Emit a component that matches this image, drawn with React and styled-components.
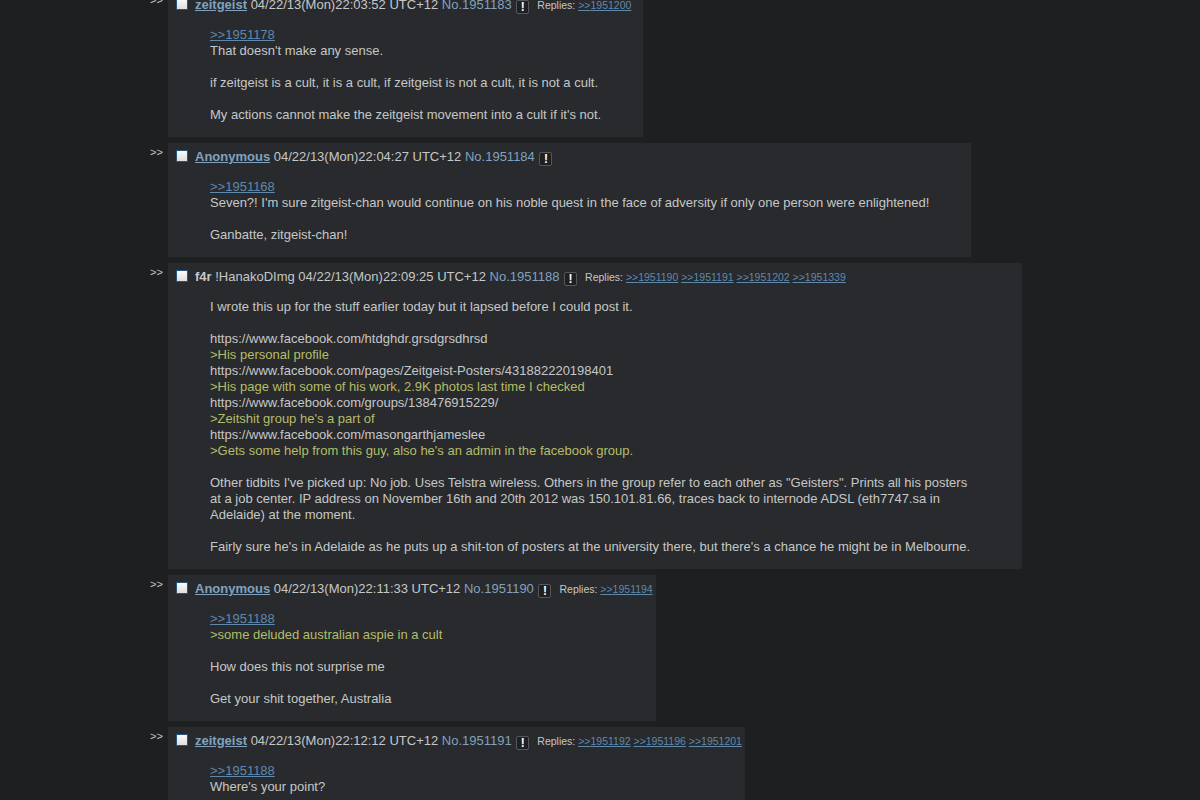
import React from 'react';
import styled, { createGlobalStyle } from 'styled-components';

const GlobalStyle = createGlobalStyle`
  body {
    margin: 0;
    background: #1d1f21;
    color: #c5c8c6;
    font-family: "Liberation Sans", Arial, sans-serif;
    font-size: 13px;
  }
`;

const Thread = styled.div`
  display: flex;
  flex-direction: column;
  align-items: flex-start;
  gap: 6px;
  padding-left: 150px;
  margin-top: -9px;
  height: 809px;
  overflow: hidden;
`;

const Row = styled.div`
  display: flex;
  align-items: flex-start;
`;

const SideArrows = styled.div`
  width: 18px;
  font-size: 11px;
  line-height: 12px;
  margin-top: 3px;
  color: #c5c8c6;
`;

const Post = styled.div`
  background: #282a2e;
  padding: 2px;
  max-width: 855px;
`;

const PostInfo = styled.div`
  height: 24px;
  line-height: 24px;
  padding: 0 1px 0 6px;
  white-space: nowrap;
`;

const Check = styled.span`
  display: inline-block;
  width: 10px;
  height: 10px;
  border: 1px solid #2a5580;
  background: linear-gradient(#fbfbfb, #dedede);
  vertical-align: -1px;
  margin-right: 7px;
`;

const Name = styled.a`
  font-weight: bold;
  color: ${p => (p.$link ? '#81a2be' : '#c5c8c6')};
  text-decoration: ${p => (p.$link ? 'underline' : 'none')};
`;

const PostNum = styled.span`
  color: #81a2be;
`;

const Menu = styled.span`
  display: inline-block;
  width: 11px;
  height: 12px;
  line-height: 12px;
  margin: 0 8px 0 1px;
  border: 1px solid #55575a;
  border-radius: 2px;
  background: #1d1f21;
  color: #fff;
  font-weight: bold;
  font-size: 12px;
  text-align: center;
  vertical-align: -2px;
`;

const Replies = styled.span`
  font-size: 10.5px;
`;

const QuoteLink = styled.a`
  color: #5f89ac;
  text-decoration: underline;
`;

const Body = styled.div`
  margin: 10px 40px 12px 40px;
  max-width: 770px;
  line-height: 16px;
`;

const Line = styled.div`
  min-height: 16px;
  color: ${p => (p.$green ? '#b5bd68' : '#c5c8c6')};
`;

const posts = [
  {
    name: 'zeitgeist', link: true, time: '22:03:52', no: 1951183, replies: [1951200],
    body: [{ q: 1951178 }, "That doesn't make any sense.", '', 'if zeitgeist is a cult, it is a cult, if zeitgeist is not a cult, it is not a cult.', '', "My actions cannot make the zeitgeist movement into a cult if it's not."],
  },
  {
    name: 'Anonymous', link: true, time: '22:04:27', no: 1951184, replies: [],
    body: [{ q: 1951168 }, "Seven?! I'm sure zitgeist-chan would continue on his noble quest in the face of adversity if only one person were enlightened!", '', 'Ganbatte, zitgeist-chan!'],
  },
  {
    name: 'f4r', trip: '!HanakoDImg', time: '22:09:25', no: 1951188, replies: [1951190, 1951191, 1951202, 1951339],
    body: [
      'I wrote this up for the stuff earlier today but it lapsed before I could post it.',
      '',
      'https://www.facebook.com/htdghdr.grsdgrsdhrsd',
      { g: '>His personal profile' },
      'https://www.facebook.com/pages/Zeitgeist-Posters/431882220198401',
      { g: '>His page with some of his work, 2.9K photos last time I checked' },
      'https://www.facebook.com/groups/138476915229/',
      { g: ">Zeitshit group he's a part of" },
      'https://www.facebook.com/masongarthjameslee',
      { g: ">Gets some help from this guy, also he's an admin in the facebook group." },
      '',
      'Other tidbits I\'ve picked up: No job. Uses Telstra wireless. Others in the group refer to each other as "Geisters". Prints all his posters at a job center. IP address on November 16th and 20th 2012 was 150.101.81.66, traces back to internode ADSL (eth7747.sa in Adelaide) at the moment.',
      '',
      "Fairly sure he's in Adelaide as he puts up a shit-ton of posters at the university there, but there's a chance he might be in Melbourne.",
    ],
  },
  {
    name: 'Anonymous', link: true, time: '22:11:33', no: 1951190, replies: [1951194],
    body: [{ q: 1951188 }, { g: '>some deluded australian aspie in a cult' }, '', 'How does this not surprise me', '', 'Get your shit together, Australia'],
  },
  {
    name: 'zeitgeist', link: true, time: '22:12:12', no: 1951191, replies: [1951192, 1951196, 1951201],
    body: [{ q: 1951188 }, "Where's your point?", ''],
  },
];

function BodyLine({ item }) {
  if (typeof item === 'string') return <Line>{item}</Line>;
  if (item.g) return <Line $green>{item.g}</Line>;
  return (
    <Line>
      <QuoteLink>&gt;&gt;{item.q}</QuoteLink>
    </Line>
  );
}

function Reply({ post }) {
  return (
    <Row>
      <SideArrows>&gt;&gt;</SideArrows>
      <Post>
        <PostInfo>
          <Check />
          <Name $link={post.link}>{post.name}</Name>
          {post.trip && <> {post.trip}</>}
          {' '}04/22/13(Mon){post.time} UTC+12{' '}
          <PostNum>No.{post.no}</PostNum>
          {' '}<Menu>!</Menu>
          {post.replies.length > 0 && (
            <Replies>
              Replies:
              {post.replies.map(r => (
                <React.Fragment key={r}>
                  {' '}<QuoteLink>&gt;&gt;{r}</QuoteLink>
                </React.Fragment>
              ))}
            </Replies>
          )}
        </PostInfo>
        <Body>
          {post.body.map((item, i) => <BodyLine key={i} item={item} />)}
        </Body>
      </Post>
    </Row>
  );
}

export default function App() {
  return (
    <>
      <GlobalStyle />
      <Thread>
        {posts.map(p => <Reply key={p.no} post={p} />)}
      </Thread>
    </>
  );
}
